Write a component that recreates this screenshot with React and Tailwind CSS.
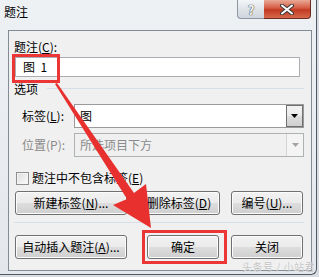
import React from "react";

function Btn({ className, children }) {
  return (
    <button
      type="button"
      className={
        "h-[24px] rounded-[3px] border border-[#707070] bg-[linear-gradient(#f2f2f2,#ebebeb_48%,#dddddd_52%,#cfcfcf)] text-[12px] leading-[16px] text-black shadow-[inset_0_0_0_1px_#fcfcfc] " +
        className
      }
    >
      {children}
    </button>
  );
}

function Arrow({ disabled }) {
  return (
    <svg width="7" height="4" viewBox="0 0 7 4">
      <path d="M0 0H7L3.5 4Z" fill={disabled ? "#a3a3a3" : "#000"} />
    </svg>
  );
}

function App() {
  return (
    <div className="relative w-[319px] h-[277px] overflow-hidden bg-[#d9dde1] font-['Noto_Sans_CJK_SC',sans-serif] text-[12px] text-black">
      <div className="flex flex-col w-[317px] h-[275px] rounded-br-[6px] border-r border-b border-[#4f5963] bg-[linear-gradient(#eef1f4,#e3e7eb)]">
        {/* title bar */}
        <div className="flex justify-between items-start h-[30px]">
          <span className="pl-[4px] pt-[4px] leading-[16px]">题注</span>
          <div className="flex mr-[5px]">
            <div className="flex items-center justify-center w-[27px] h-[19px] rounded-bl-[4px] border-l border-b border-[#8d96a0] bg-[linear-gradient(#f3f5f7,#dfe4e9_50%,#cfd5dc)] text-[13px] font-bold leading-none text-[#f7f7f7] [text-shadow:0_0_1px_#333,0_0_1px_#333]">
              ?
            </div>
            <div className="flex items-center justify-center w-[47px] h-[19px] rounded-br-[4px] border-b border-r border-[#6b2a22] bg-[linear-gradient(#e9a996,#d65a42_45%,#c23a22_55%,#d7694d)]">
              <svg width="14" height="11" viewBox="0 0 14 11">
                <path d="M2 1.5L12 9.5M12 1.5L2 9.5" stroke="#3a3a3a" strokeWidth="4" strokeLinecap="round" />
                <path d="M2 1.5L12 9.5M12 1.5L2 9.5" stroke="#fff" strokeWidth="2" strokeLinecap="round" />
              </svg>
            </div>
          </div>
        </div>

        {/* client */}
        <div className="ml-[8px] w-[304px] h-[241px] border border-[#838b94] bg-[#f0f0f0] pl-[5px] pr-[7px]">
          <div className="mt-[8px] leading-[16px]">
            题注(<span className="underline">C</span>):
          </div>
          <div className="mt-[2px] ml-px w-[285px] h-[20px] border border-[#abadb3] bg-white pl-[7px] leading-[18px]">
            图&nbsp;&nbsp;1
          </div>

          <div className="mt-[4px] flex items-center h-[16px] leading-[16px]">
            <span>选项</span>
            <div className="ml-[9px] mb-[2px] flex-1 h-px bg-[#d5dfe5]" />
          </div>

          <div className="mt-[7px] pl-[8px] flex items-center">
            <span className="w-[52px] leading-[16px]">
              标签(<span className="underline">L</span>):
            </span>
            <div className="flex w-[230px] h-[24px] border border-[#9a9a9a] bg-white">
              <span className="flex-1 pl-[5px] leading-[22px]">图</span>
              <div className="flex items-center justify-center w-[17px] border border-[#707070] bg-[linear-gradient(#f2f2f2,#ebebeb_48%,#dddddd_52%,#cfcfcf)]">
                <Arrow />
              </div>
            </div>
          </div>

          <div className="mt-[5px] pl-[8px] flex items-center text-[#8a8a8a]">
            <span className="w-[52px] leading-[16px]">位置(P):</span>
            <div className="flex w-[230px] h-[24px] border border-[#adb2b5] bg-[#f0f0f0]">
              <span className="flex-1 pl-[5px] leading-[22px]">所选项目下方</span>
              <div className="flex items-center justify-center w-[17px] border-l border-[#d5d5d5] bg-[#f4f4f4]">
                <Arrow disabled />
              </div>
            </div>
          </div>

          <div className="mt-[13px] ml-[2px] flex items-center gap-[3px] h-[16px] leading-[16px]">
            <div className="w-[13px] h-[13px] border border-[#8e8f8f] bg-[linear-gradient(135deg,#dcdcdc,#fbfbfb)] shadow-[inset_0_0_0_1px_#f4f4f4]" />
            <span>
              题注中不包含标签(<span className="underline">E</span>)
            </span>
          </div>

          <div className="mt-[5px] flex">
            <Btn className="ml-px w-[112px]">
              新建标签(<span className="underline">N</span>)...
            </Btn>
            <Btn className="ml-[11px] w-[82px]">
              删除标签(<span className="underline">D</span>)
            </Btn>
            <Btn className="ml-[11px] w-[72px]">
              编号(<span className="underline">U</span>)...
            </Btn>
          </div>

          <div className="mt-[7px] h-px bg-[#d5dfe5]" />

          <div className="mt-[12px] flex">
            <Btn className="ml-px w-[112px]">
              自动插入题注(<span className="underline">A</span>)...
            </Btn>
            <Btn className="ml-[20px] w-[72px]">确定</Btn>
            <Btn className="ml-[12px] w-[72px]">关闭</Btn>
          </div>
        </div>
      </div>

      {/* annotations */}
      <div className="absolute left-[12px] top-[54px] w-[48px] h-[29px] border-[3px] border-[#ec3535]" />
      <div className="absolute left-[142px] top-[230px] w-[85px] h-[34px] border-[3px] border-[#ec3535]" />
      <svg className="absolute left-0 top-0" width="319" height="277" viewBox="0 0 319 277">
        <polygon
          points="55,84 57,83 134,193 146,184 151,228 113,205 127,199"
          fill="#e8302e"
        />
      </svg>
      <div className="absolute left-[242px] top-[261px] text-[10px] leading-[12px] tracking-[0.5px] text-[#c4c4c4] [text-shadow:0_0_1px_#fff]">
        头条号 / 小站君
      </div>
    </div>
  );
}

export default App;
